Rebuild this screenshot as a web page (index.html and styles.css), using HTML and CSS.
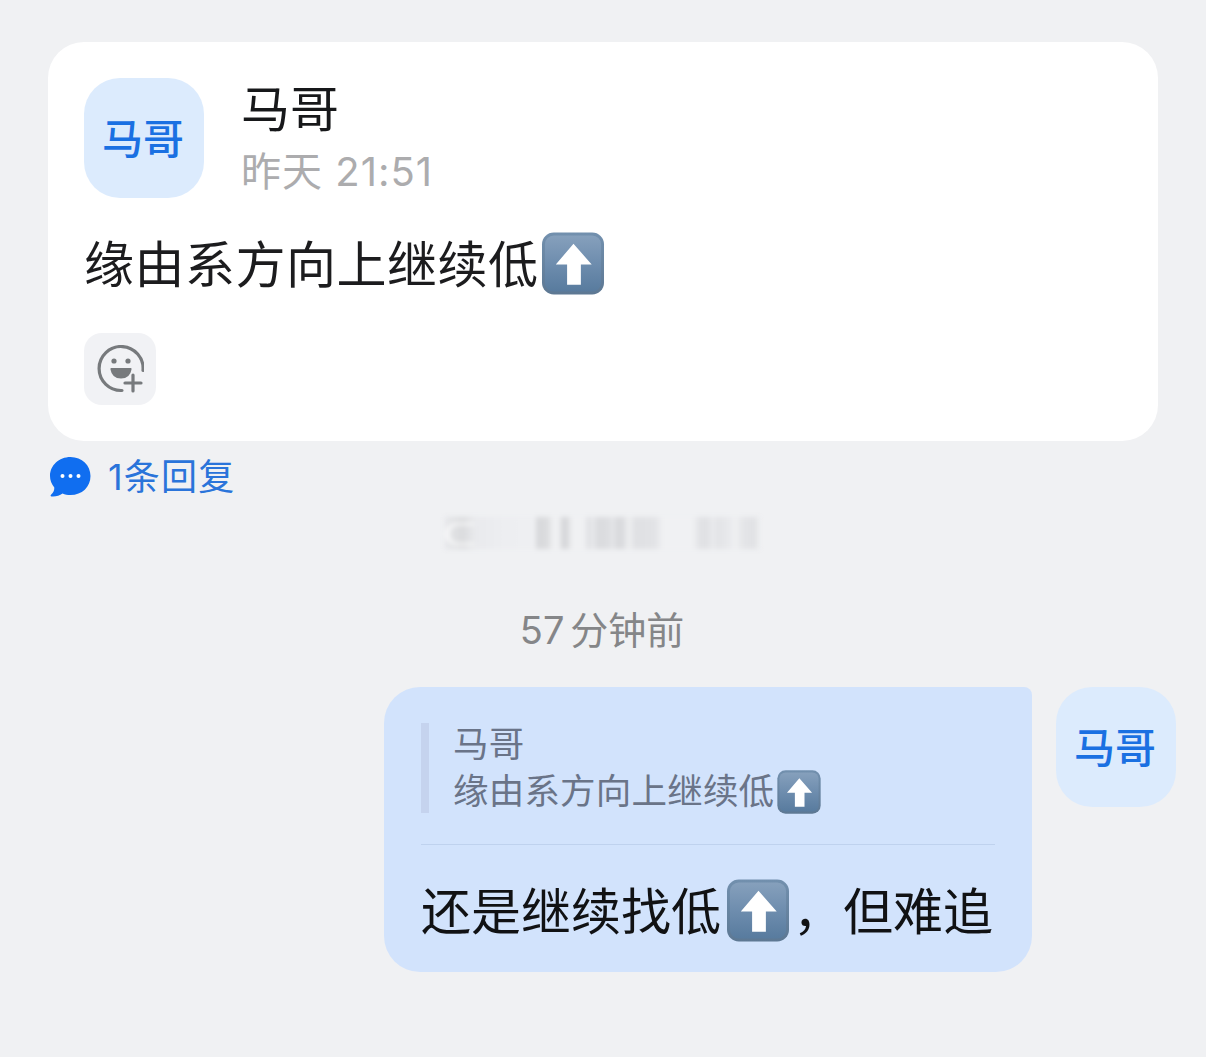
FILE: index.html
```html
<!DOCTYPE html>
<html lang="zh">
<head>
<meta charset="utf-8">
<title>消息</title>
<link rel="stylesheet" href="styles.css">
</head>
<body>
<svg class="defs" width="0" height="0" aria-hidden="true">
  <defs>
    <linearGradient id="emojiEdge" x1="0" y1="0" x2="0" y2="1">
      <stop offset="0" stop-color="#7290ae"/>
      <stop offset="1" stop-color="#5d7893"/>
    </linearGradient>
    <linearGradient id="emojiFill" x1="0" y1="0" x2="0" y2="1">
      <stop offset="0" stop-color="#86a0bc"/>
      <stop offset="0.5" stop-color="#6e8dae"/>
      <stop offset="1" stop-color="#587b9e"/>
    </linearGradient>
    <symbol id="upArrow" viewBox="0 0 64 64">
      <rect x="0.5" y="0.5" width="63" height="63" rx="12" fill="url(#emojiEdge)"/>
      <rect x="3.5" y="3.5" width="57" height="57" rx="9" fill="url(#emojiFill)"/>
      <path d="M32.500 12 L51 33 H40 V53.500 H26 V33 H14.500 Z" fill="#fff"/>
    </symbol>
  </defs>
</svg>

<main class="page">
  <section class="card">
    <header class="head">
      <div class="avatar">马哥</div>
      <div class="meta">
        <div class="name">马哥</div>
        <div class="when">昨天 21:51</div>
      </div>
    </header>
    <p class="msg">缘由系方向上继续低<svg class="emoji" viewBox="0 0 64 64"><use href="#upArrow"/></svg></p>
    <button class="react" aria-label="添加表情">
      <svg viewBox="-1 0 48 48" width="48" height="48">
        <path d="M46 25.500 A22 22 0 1 0 25 45.500" fill="none" stroke="#777a7d" stroke-width="3.200" stroke-linecap="round"/>
        <circle cx="17" cy="16" r="2.600" fill="#777a7d"/>
        <circle cx="31" cy="16" r="2.600" fill="#777a7d"/>
        <path d="M14 23 H34 Q34.800 23 34.500 24.500 Q33 33.500 24 33.500 Q15 33.500 13.500 24.500 Q13.200 23 14 23 Z" fill="#777a7d"/>
        <path d="M36 30 V46 M28 38 H44" stroke="#777a7d" stroke-width="3.200" stroke-linecap="round"/>
      </svg>
    </button>
  </section>

  <div class="replies">
    <svg class="chat" viewBox="0 0 42 42" width="42" height="42">
      <path d="M21.500 1 C33 1 41.500 9.500 41.500 20 C41.500 31 33 39 21.500 39 C18.500 39 16 38.500 13.500 37.500 C10.500 39.500 6.500 41 2.500 40.500 C1.500 40.300 1.300 39.300 2 38.700 C4.500 36.500 5.500 34 5.300 31.500 C2.500 28 1 24.200 1 20 C1 9.500 10 1 21.500 1 Z" fill="#106ef0"/>
      <circle cx="13.500" cy="20" r="2" fill="#fff"/>
      <circle cx="21.500" cy="20" r="2" fill="#fff"/>
      <circle cx="29.500" cy="20" r="2" fill="#fff"/>
    </svg>
    <span class="replies-text">1条回复</span>
  </div>

  <div class="blurred" aria-hidden="true"><span class="capsule"></span></div>

  <div class="stamp">57 分钟前</div>

  <div class="mine">
    <div class="bubble">
      <div class="quote">
        <div class="quote-text">
          <div class="quote-line">马哥</div>
          <div class="quote-line quote-body">缘由系方向上继续低<svg class="emoji-sm" viewBox="0 0 64 64"><use href="#upArrow"/></svg></div>
        </div>
      </div>
      <hr class="rule">
      <p class="reply">还是继续找低<svg class="emoji emoji-reply" viewBox="0 0 64 64"><use href="#upArrow"/></svg>，但难追</p>
    </div>
    <div class="avatar">马哥</div>
  </div>
</main>
</body>
</html>
```

FILE: styles.css
```css
* { box-sizing: border-box; }

html, body {
  margin: 0;
  background: #f0f1f3;
}

body {
  font-family: "Noto Sans CJK SC", "Noto Sans", sans-serif;
  color: #1c1c1e;
}

.defs { display: block; height: 0; }

.page {
  width: 1206px;
  height: 1057px;
  padding: 42px 30px 0 48px;
  overflow: hidden;
}

.card {
  width: 1110px;
  height: 399px;
  background: #fff;
  border-radius: 36px;
  padding: 36px;
}

.head { display: flex; gap: 37px; height: 120px; }

.avatar {
  width: 120px;
  height: 120px;
  flex: none;
  display: flex;
  align-items: center;
  justify-content: center;
  padding: 0 2px 4px 0;
  background: #dcebfd;
  border-radius: 36px;
  color: #1a70e2;
  font-size: 41px;
  font-weight: 500;
  line-height: 1;
}

.name {
  font-size: 49px;
  line-height: 56px;
  color: #17181a;
}

.when {
  margin-top: 10px;
  font-family: Inter, "Noto Sans CJK SC", sans-serif;
  font-size: 40px;
  letter-spacing: 1px;
  line-height: 56px;
  color: #acacae;
}

.msg {
  margin: 35px 0 0;
  height: 64px;
  padding-bottom: 8px;
  display: flex;
  align-items: center;
  font-size: 50px;
  letter-spacing: 0.500px;
  line-height: 56px;
  color: #1c1c1e;
}

.emoji {
  width: 64px;
  height: 63px;
  flex: none;
  margin: 4px 0 0 2px;
}

.react {
  display: flex;
  align-items: center;
  justify-content: center;
  width: 72px;
  height: 72px;
  margin-top: 36px;
  padding: 0;
  border: 0;
  border-radius: 18px;
  background: #f1f2f5;
}

.replies {
  display: flex;
  align-items: center;
  gap: 17px;
  height: 42px;
  margin: 15px 0 0 1px;
}

.replies-text {
  font-family: Inter, "Noto Sans CJK SC", sans-serif;
  font-size: 36px;
  letter-spacing: 1.200px;
  line-height: 42px;
  color: #2a74da;
}

.blurred {
  width: 315px;
  height: 32px;
  margin: 19px 0 0 397px;
  padding: 6px 0 0 1px;
  filter: blur(2.500px);
  background: linear-gradient(90deg,
    #e6e7ea 0, #dadbdd 18px, #e9eaed 30px, #edeef1 60px, #eeeff2 85px,
    #f0f1f3 88px, #f0f1f3 90px, #d6d7da 92px, #dcdddf 103px, #f0f1f3 108px,
    #f0f1f3 114px, #d3d4d7 118px, #d8d9db 122px, #f0f1f3 127px,
    #f0f1f3 140px, #dcdde0 143px, #eaebee 148px, #dadbde 152px, #dcdde0 163px, #e6e7ea 168px, #d8d9dc 172px, #dadbde 178px, #f0f1f3 184px,
    #dfe0e3 190px, #e2e3e6 210px, #f0f1f3 218px, #f0f1f3 248px,
    #e2e3e6 254px, #dfe0e3 262px, #ebecef 268px, #e2e3e6 272px, #e8e9ec 284px, #f0f1f3 290px,
    #e4e5e8 298px, #e0e1e4 310px, #f0f1f3 315px);
}

.capsule {
  display: block;
  width: 28px;
  height: 22px;
  border-left: 3px solid #fff;
  border-top: 2px solid #fff;
  border-bottom: 2px solid #fff;
  border-radius: 11px 0 0 11px;
}

.stamp {
  margin-top: 56px;
  padding-right: 20px;
  text-align: center;
  font-family: Inter, "Noto Sans CJK SC", sans-serif;
  font-size: 38px;
  line-height: 50px;
  color: #858688;
  word-spacing: -5px;
}

.mine {
  display: flex;
  justify-content: flex-end;
  align-items: flex-start;
  gap: 24px;
  margin-top: 32px;
}

.bubble {
  width: 648px;
  height: 285px;
  padding: 36px 36px 0 37px;
  background: #d2e3fc;
  border-radius: 36px 8px 36px 36px;
}

.quote {
  display: flow-root;
  height: 90px;
  padding-left: 24px;
  border-left: 8px solid #c5d3ee;
}

.quote-text {
  margin-top: -4px;
  font-size: 35.500px;
  letter-spacing: 0.200px;
  line-height: 46px;
  color: #6a7488;
}

.quote-line {
  display: flex;
  align-items: center;
  height: 46px;
}

.quote-body { margin-top: 1px; }

.emoji-sm {
  width: 46px;
  height: 44px;
  flex: none;
  margin: 6px 0 0 2px;
}

.rule {
  width: 574px;
  height: 1px;
  margin: 31px 0 0;
  border: 0;
  background: #bfd2ee;
}

.reply {
  margin: 35px 0 0;
  display: flex;
  align-items: center;
  height: 64px;
  padding-bottom: 8px;
  font-size: 50px;
  line-height: 56px;
  color: #111214;
  white-space: nowrap;
}

.emoji-reply { margin: 4px 3px 0 5px; }
```
